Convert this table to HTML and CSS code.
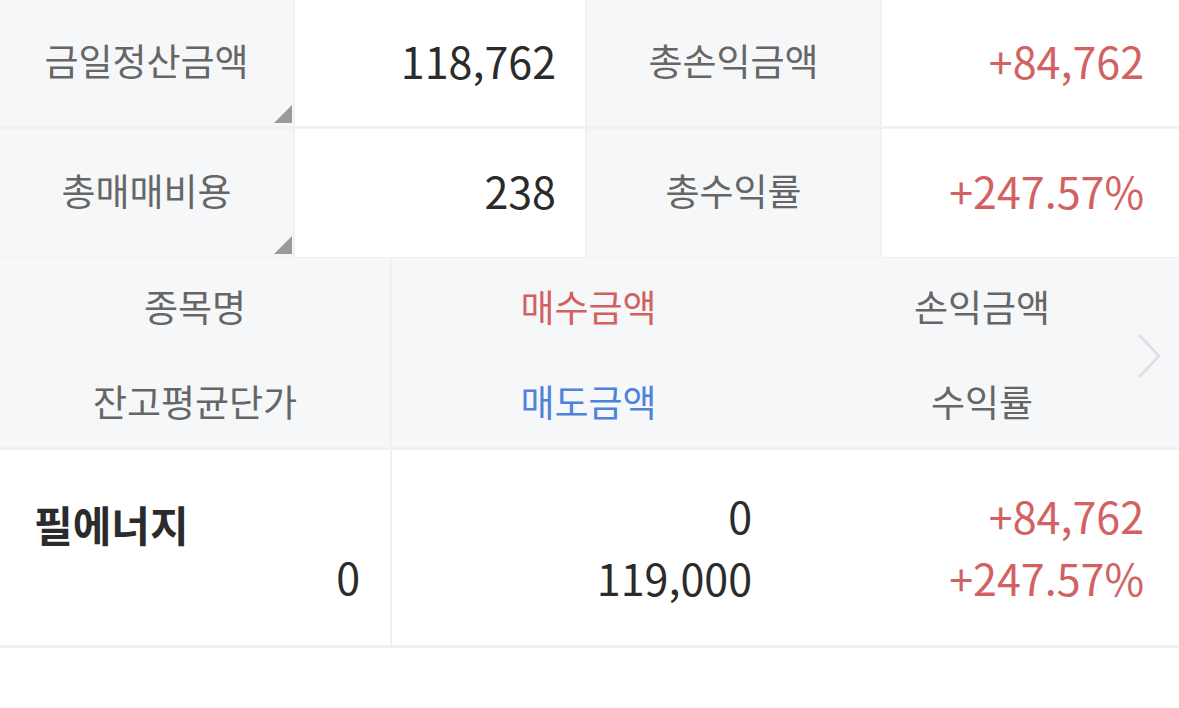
FILE: index.html
```html
<!DOCTYPE html>
<html lang="ko">
<head>
<meta charset="utf-8">
<link rel="stylesheet" href="styles.css">
</head>
<body>
<div class="page">
  <div class="summary">
    <div class="lab tri">금일정산금액</div>
    <div class="val">118,762</div>
    <div class="lab">총손익금액</div>
    <div class="val red">+84,762</div>
    <div class="lab tri">총매매비용</div>
    <div class="val">238</div>
    <div class="lab">총수익률</div>
    <div class="val red">+247.57%</div>
  </div>

  <div class="table">
    <div class="thead">
      <div class="col c1">
        <div class="hline">종목명</div>
        <div class="hline">잔고평균단가</div>
      </div>
      <div class="col c2">
        <div class="hline red">매수금액</div>
        <div class="hline blue">매도금액</div>
      </div>
      <div class="col c3">
        <div class="hline">손익금액</div>
        <div class="hline">수익률</div>
      </div>
      <svg class="chev" width="30" height="50" viewBox="0 0 30 50"><path d="M5 3 L24 23 L5 43" fill="none" stroke="#dfe0e3" stroke-width="3" stroke-linecap="round" stroke-linejoin="round"/></svg>
    </div>
    <div class="trow">
      <div class="col c1 dcol1">
        <div class="name">필에너지</div>
        <div class="num right">0</div>
      </div>
      <div class="col c2 dcol">
        <div class="num">0</div>
        <div class="num">119,000</div>
      </div>
      <div class="col c3 dcol">
        <div class="num red">+84,762</div>
        <div class="num red">+247.57%</div>
      </div>
    </div>
  </div>
</div>
</body>
</html>
```

FILE: styles.css
```css
* { box-sizing: border-box; }
html, body { margin: 0; padding: 0; background: #ffffff; }
body {
  font-family: "Noto Sans CJK KR", "Noto Sans", sans-serif;
  width: 1179px;
  height: 708px;
  overflow: hidden;
}
.page { width: 1179px; }

.summary {
  display: grid;
  grid-template-columns: 293px 290px 293px 1fr;
  grid-template-rows: 126px 128px;
  column-gap: 2px;
  row-gap: 3px;
  background: #f0f1f3;
  padding-bottom: 1px;
}
.lab {
  background: #f6f7f9;
  color: #666666;
  font-size: 37px;
  display: flex;
  align-items: center;
  justify-content: center;
  position: relative;
  padding-bottom: 6px;
}
.tri::after {
  content: "";
  position: absolute;
  right: 1px;
  bottom: 3px;
  width: 0;
  height: 0;
  border-style: solid;
  border-width: 0 0 18px 18px;
  border-color: transparent transparent #9a9a9a transparent;
}
.val {
  background: #ffffff;
  color: #2b2b2b;
  font-size: 43px;
  display: flex;
  align-items: center;
  justify-content: flex-end;
  padding-right: 29px;
  padding-bottom: 6px;
}
.summary .val:nth-child(4), .summary .val:nth-child(8) { padding-right: 35px; }

.red { color: #d26262 !important; }
.blue { color: #4f83d9 !important; }

.thead, .trow {
  display: grid;
  grid-template-columns: 392px 393px 1fr;
  position: relative;
}
.thead {
  background: #f6f7f9;
  height: 192px;
  border-bottom: 3px solid #f0f1f3;
}
.thead .c1 { border-right: 2px solid #eff0f2; }
.hline {
  height: 94px;
  display: flex;
  align-items: center;
  justify-content: center;
  font-size: 37px;
  color: #666666;
}
.hline:first-child { height: 96px; }
.chev {
  position: absolute;
  right: 14px;
  top: 75px;
}

.trow {
  height: 198px;
  border-bottom: 3px solid #f0f1f3;
}
.trow .c1 { border-right: 2px solid #eff0f2; }
.dcol1 {
  display: flex;
  flex-direction: column;
  justify-content: center;
  padding: 0 30px 0 34px;
}
.name {
  font-size: 42px;
  font-weight: 700;
  color: #2b2b2b;
  line-height: 54px;
  margin-top: 2px;
}
.num {
  font-size: 43px;
  color: #2b2b2b;
  line-height: 62px;
  text-align: right;
}
.dcol1 .num { line-height: 50px; }
.dcol {
  display: flex;
  flex-direction: column;
  justify-content: center;
  padding-right: 33px;
  padding-bottom: 4px;
}
.c3.dcol { padding-right: 35px; }
```
